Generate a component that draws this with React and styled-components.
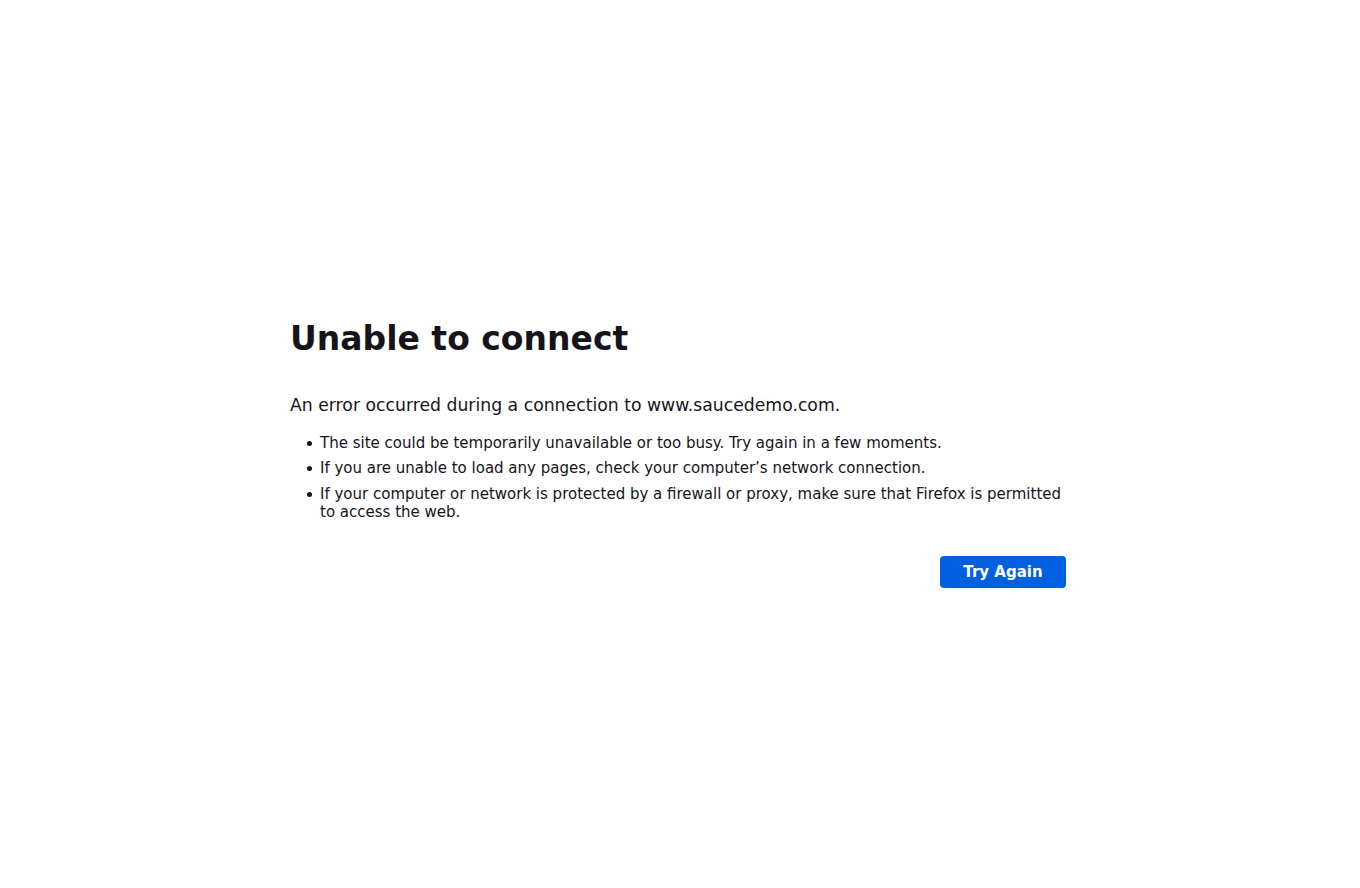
import React from 'react';
import styled, { createGlobalStyle } from 'styled-components';

const GlobalStyle = createGlobalStyle`
  html, body {
    margin: 0;
    padding: 0;
    background: #ffffff;
  }
  body {
    font-family: 'DejaVu Sans', sans-serif;
    color: #15141a;
  }
`;

const Page = styled.div`
  display: flex;
  justify-content: center;
  min-height: 888px;
  padding-top: 318px;
  box-sizing: border-box;
`;

const Container = styled.div`
  width: 776px;
  margin-left: -4px;
`;

const Title = styled.h1`
  font-size: 33px;
  font-weight: 700;
  line-height: 1.3;
  margin: 0 0 32px;
`;

const Intro = styled.p`
  font-size: 17.25px;
  line-height: 1.5;
  margin: 0 0 15px;
`;

const List = styled.ul`
  margin: 0;
  padding-left: 30px;
  list-style: none;
`;

const Item = styled.li`
  position: relative;
  font-size: 15px;
  line-height: 18px;
  margin-bottom: 7.5px;

  &::before {
    content: '';
    position: absolute;
    left: -13px;
    top: 7px;
    width: 5px;
    height: 5px;
    border-radius: 50%;
    background: #15141a;
  }
`;

const Actions = styled.div`
  display: flex;
  justify-content: flex-end;
  margin-top: 35px;
`;

const Button = styled.button`
  background: #0061e0;
  color: #ffffff;
  border: none;
  border-radius: 4px;
  height: 32px;
  min-width: 126px;
  padding: 0 16px;
  font-family: 'DejaVu Sans', sans-serif;
  font-size: 15px;
  font-weight: 700;
  cursor: pointer;
`;

export default function App() {
  return (
    <>
      <GlobalStyle />
      <Page>
        <Container>
          <Title>Unable to connect</Title>
          <Intro>An error occurred during a connection to www.saucedemo.com.</Intro>
          <List>
            <Item>The site could be temporarily unavailable or too busy. Try again in a few moments.</Item>
            <Item>If you are unable to load any pages, check your computer’s network connection.</Item>
            <Item>If your computer or network is protected by a firewall or proxy, make sure that Firefox is permitted to access the web.</Item>
          </List>
          <Actions>
            <Button>Try Again</Button>
          </Actions>
        </Container>
      </Page>
    </>
  );
}
